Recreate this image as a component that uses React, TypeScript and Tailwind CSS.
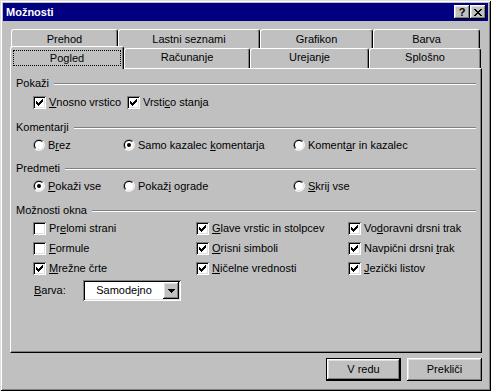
import React from 'react';

// win98-ish bevels
const raised =
  'shadow-[inset_-1px_-1px_0_#000,inset_1px_1px_0_#fff,inset_-2px_-2px_0_#808080,inset_2px_2px_0_#dfdfdf]';
const sunken =
  'shadow-[inset_1px_1px_0_#808080,inset_-1px_-1px_0_#fff,inset_2px_2px_0_#000,inset_-2px_-2px_0_#dfdfdf]';

const tabBase =
  'h-full flex justify-center border-t border-l border-white border-r border-r-black rounded-t-[3px] shadow-[inset_-1px_0_0_#808080]';

const backTabs: [string, string][] = [
  ['Prehod', 'w-[107px]'],
  ['Lastni seznami', 'w-[142px]'],
  ['Grafikon', 'w-[113px]'],
  ['Barva', 'w-[107px]'],
];

const frontTabs: [string, string][] = [
  ['Računanje', 'w-[126px]'],
  ['Urejanje', 'w-[119px]'],
  ['Splošno', 'w-[112px]'],
];

function Check({ on }: { on?: boolean }) {
  return (
    <span className={`w-[13px] h-[13px] bg-white shrink-0 flex items-center justify-center ${sunken}`}>
      {on && (
        <svg width="7" height="7" viewBox="0 0 7 7" shapeRendering="crispEdges">
          {[2, 3, 4, 3, 2, 1, 0].map((y, x) => (
            <rect key={x} x={x} y={y} width="1" height="3" fill="#000" />
          ))}
        </svg>
      )}
    </span>
  );
}

function Radio({ on }: { on?: boolean }) {
  return (
    <svg width="12" height="12" viewBox="0 0 12 12" className="shrink-0">
      <path d="M1.76 10.24 A6 6 0 0 1 10.24 1.76 Z" fill="#808080" />
      <path d="M10.24 1.76 A6 6 0 0 1 1.76 10.24 Z" fill="#fff" />
      <path d="M2.46 9.54 A5 5 0 0 1 9.54 2.46 Z" fill="#000" />
      <path d="M9.54 2.46 A5 5 0 0 1 2.46 9.54 Z" fill="#dfdfdf" />
      <circle cx="6" cy="6" r="4" fill="#fff" />
      {on && <circle cx="6" cy="6" r="2" fill="#000" />}
    </svg>
  );
}

function Group({ title, className = '' }: { title: string; className?: string }) {
  return (
    <div className={`flex h-[13px] ${className}`}>
      <span>{title}</span>
      <div className="flex-1 ml-[5px] mt-[6px] h-[2px] border-t border-t-[#808080] border-b border-b-white" />
    </div>
  );
}

function CheckItem({ on, children, className = '' }: { on?: boolean; children: React.ReactNode; className?: string }) {
  return (
    <div className={`flex items-start gap-[3px] ${className}`}>
      <Check on={on} />
      <span>{children}</span>
    </div>
  );
}

function RadioItem({ on, children, className = '' }: { on?: boolean; children: React.ReactNode; className?: string }) {
  return (
    <div className={`flex items-start gap-[3px] ${className}`}>
      <Radio on={on} />
      <span>{children}</span>
    </div>
  );
}

export default function App() {
  return (
    <div
      className={`w-[491px] h-[391px] bg-[#c0c0c0] p-[3px] flex flex-col font-['Liberation_Sans',Arial,sans-serif] text-[11px] leading-[13px] text-black select-none shadow-[inset_1px_1px_0_#dfdfdf,inset_-1px_-1px_0_#000,inset_2px_2px_0_#fff,inset_-2px_-2px_0_#808080]`}
    >
      {/* title bar */}
      <div className="h-[18px] shrink-0 bg-[#000080] flex items-center pl-[3px] pr-[2px]">
        <span className="font-bold text-white">Možnosti</span>
        <div className="ml-auto flex">
          <div className={`w-[16px] h-[14px] bg-[#c0c0c0] flex items-center justify-center font-bold text-[11px] leading-none ${raised}`}>
            ?
          </div>
          <div className={`w-[16px] h-[14px] bg-[#c0c0c0] flex items-center justify-center ${raised}`}>
            <svg width="8" height="7" viewBox="0 0 8 7" shapeRendering="crispEdges">
              {[0, 1, 2, 3, 2, 1, 0].map((o, y) => (
                <g key={y} fill="#000">
                  <rect x={o} y={y} width="2" height="1" />
                  <rect x={6 - o} y={y} width="2" height="1" />
                </g>
              ))}
            </svg>
          </div>
        </div>
      </div>

      {/* tabs, back row */}
      <div className="mt-[8px] ml-[8px] flex h-[19px] shrink-0">
        {backTabs.map(([t, w]) => (
          <div key={t} className={`${w} ${tabBase} items-center`}>
            {t}
          </div>
        ))}
      </div>

      {/* tabs, front row */}
      <div className="ml-[7px] flex items-end h-[20px] shrink-0">
        <div className="w-[114px] h-[23px] -mb-[1px] relative z-10 bg-[#c0c0c0] pt-[3px] px-[2px] border-t border-l border-white border-r border-r-black rounded-t-[3px] shadow-[inset_-1px_0_0_#808080]">
          <div className="h-[16px] border border-dotted border-black flex items-center justify-center">Pogled</div>
        </div>
        {frontTabs.map(([t, w]) => (
          <div key={t} className={`${w} ${tabBase} h-[20px] pt-[2px]`}>
            {t}
          </div>
        ))}
      </div>

      {/* panel */}
      <div className="ml-[7px] w-[472px] h-[285px] shrink-0 flex flex-col pl-[5px] pr-[5px] border border-white border-r-black border-b-black shadow-[inset_-1px_-1px_0_#808080]">
        <Group title="Pokaži" className="mt-[8px]" />
        <div className="mt-[6px] pl-[17px] flex h-[13px]">
          <CheckItem on className="w-[94px]">
            <u>V</u>nosno vrstico
          </CheckItem>
          <CheckItem on>
            Vrsti<u>c</u>o stanja
          </CheckItem>
        </div>

        <Group title="Komentarji" className="mt-[12px]" />
        <div className="mt-[5px] pl-[17px] flex h-[13px]">
          <RadioItem className="w-[90px]">
            B<u>r</u>ez
          </RadioItem>
          <RadioItem on className="w-[170px]">
            Samo kazalec <u>k</u>omentarja
          </RadioItem>
          <RadioItem>
            Koment<u>a</u>r in kazalec
          </RadioItem>
        </div>

        <Group title="Predmeti" className="mt-[10px]" />
        <div className="mt-[5px] pl-[17px] flex h-[13px]">
          <RadioItem on className="w-[90px]">
            <u>P</u>okaži vse
          </RadioItem>
          <RadioItem className="w-[170px]">
            Pokaž<u>i</u> ograde
          </RadioItem>
          <RadioItem>
            <u>S</u>krij vse
          </RadioItem>
        </div>

        <Group title="Možnosti okna" className="mt-[11px]" />
        <div className="mt-[5px] pl-[17px] grid grid-cols-[163px_152px_1fr] gap-y-[7px]">
          <CheckItem>
            Pr<u>e</u>lomi strani
          </CheckItem>
          <CheckItem on>
            <u>G</u>lave vrstic in stolpcev
          </CheckItem>
          <CheckItem on>
            Vo<u>d</u>oravni drsni trak
          </CheckItem>
          <CheckItem>
            <u>F</u>ormule
          </CheckItem>
          <CheckItem on>
            <u>O</u>risni simboli
          </CheckItem>
          <CheckItem on>
            Navpični drsni <u>t</u>rak
          </CheckItem>
          <CheckItem on>
            <u>M</u>režne črte
          </CheckItem>
          <CheckItem on>
            <u>N</u>ičelne vrednosti
          </CheckItem>
          <CheckItem on>
            <u>J</u>ezički listov
          </CheckItem>
        </div>

        <div className="mt-[5px] pl-[18px] flex items-center h-[21px]">
          <span className="w-[49px]">
            <u>B</u>arva:
          </span>
          <div className={`w-[98px] h-[21px] bg-white flex items-center p-[2px] ${sunken}`}>
            <span className="flex-1 text-center">Samodejno</span>
            <div className={`w-[16px] h-[17px] bg-[#c0c0c0] flex items-center justify-center ${raised}`}>
              <svg width="7" height="4" viewBox="0 0 7 4" shapeRendering="crispEdges">
                <rect x="0" y="0" width="7" height="1" />
                <rect x="1" y="1" width="5" height="1" />
                <rect x="2" y="2" width="3" height="1" />
                <rect x="3" y="3" width="1" height="1" />
              </svg>
            </div>
          </div>
        </div>
      </div>

      {/* buttons */}
      <div className="mt-[5px] flex justify-end gap-[6px] pr-[6px]">
        <button className={`w-[75px] h-[23px] border border-black bg-[#c0c0c0] ${raised}`}>V redu</button>
        <button className={`w-[75px] h-[23px] bg-[#c0c0c0] ${raised}`}>Prekliči</button>
      </div>
    </div>
  );
}
